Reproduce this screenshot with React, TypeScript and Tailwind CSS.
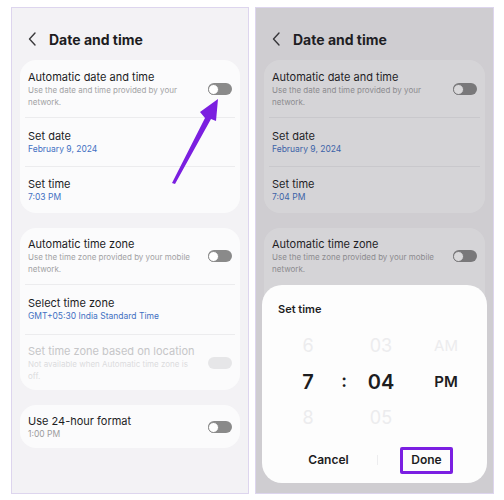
import React from "react";

type Item = {
  title: string;
  sub?: string;
  value?: string;
  valueGray?: boolean;
  toggle?: boolean;
  disabled?: boolean;
  pt: string;
  pb: string;
};

function Toggle({ disabled }: { disabled?: boolean }) {
  if (disabled) {
    return <div className="h-[12px] w-[24px] shrink-0 rounded-full bg-[#e6e6e8]" />;
  }
  return (
    <div className="flex h-[12px] w-[24px] shrink-0 items-center rounded-full bg-[#8a8a8a]">
      <div className="h-[11px] w-[11px] rounded-full border border-[#8a8a8a] bg-white" />
    </div>
  );
}

function Row({ item }: { item: Item }) {
  return (
    <div className={`flex items-center justify-between px-2 ${item.pt} ${item.pb}`}>
      <div className="w-[172px]">
        <div
          className={`text-[11px] leading-[14px] ${
            item.disabled ? "text-[#c6c6c8]" : "text-[#1d1d1f]"
          }`}
        >
          {item.title}
        </div>
        {item.sub && (
          <div
            className={`text-[8px] leading-[12px] ${
              item.disabled ? "text-[#dcdcde]" : "text-[#a2a2a4]"
            }`}
          >
            {item.sub}
          </div>
        )}
        {item.value && (
          <div
            className={`text-[8.5px] leading-[12px] ${
              item.valueGray ? "text-[#9c9c9e]" : "text-[#4270c2]"
            }`}
          >
            {item.value}
          </div>
        )}
      </div>
      {item.toggle && <Toggle disabled={item.disabled} />}
    </div>
  );
}

function Card({ items, className }: { items: Item[]; className: string }) {
  return (
    <div className={`rounded-[16px] bg-[#fbfbfc] ${className}`}>
      {items.map((it, i) => (
        <div key={it.title}>
          {i > 0 && <div className="mx-[5px] h-px bg-[#ececee]" />}
          <Row item={it} />
        </div>
      ))}
    </div>
  );
}

const timeZoneRow: Item = {
  title: "Automatic time zone",
  sub: "Use the time zone provided by your mobile network.",
  toggle: true,
  pt: "pt-[9px]",
  pb: "pb-[9px]",
};

// partial = right-hand shot, where the dialog hides everything below the first zone row
function Settings({ time, partial }: { time: string; partial?: boolean }) {
  return (
    <div className="flex flex-col">
      {/* header */}
      <div className="flex h-[18px] items-center pl-[16px] mt-[22px]">
        <svg width="9" height="14" viewBox="0 0 9 14" className="mr-[12px]">
          <polyline
            points="7,1 1.5,7 7,13"
            fill="none"
            stroke="#3a3a3c"
            strokeWidth="1.4"
            strokeLinecap="round"
            strokeLinejoin="round"
          />
        </svg>
        <span className="text-[14px] font-bold text-[#1d1d1f]">Date and time</span>
      </div>

      <Card
        className="mx-[8px] mt-[12px]"
        items={[
          {
            title: "Automatic date and time",
            sub: "Use the date and time provided by your network.",
            toggle: true,
            pt: "pt-[10px]",
            pb: "pb-[9px]",
          },
          { title: "Set date", value: "February 9, 2024", pt: "pt-[11px]", pb: "pb-[11px]" },
          { title: "Set time", value: time, pt: "pt-[10px]", pb: "pb-[10px]" },
        ]}
      />

      {partial ? (
        <Card className="mx-[8px] mt-[15px] h-[120px]" items={[timeZoneRow]} />
      ) : (
        <>
          <Card
            className="mx-[8px] mt-[15px]"
            items={[
              timeZoneRow,
              {
                title: "Select time zone",
                value: "GMT+05:30 India Standard Time",
                pt: "pt-[11px]",
                pb: "pb-[12px]",
              },
              {
                title: "Set time zone based on location",
                sub: "Not available when Automatic time zone is off.",
                toggle: true,
                disabled: true,
                pt: "pt-[9px]",
                pb: "pb-[8px]",
              },
            ]}
          />

          <Card
            className="mx-[8px] mt-[15px]"
            items={[
              {
                title: "Use 24-hour format",
                value: "1:00 PM",
                valueGray: true,
                toggle: true,
                pt: "pt-[9px]",
                pb: "pb-[8px]",
              },
            ]}
          />
        </>
      )}
    </div>
  );
}

function TimeDialog() {
  return (
    <div className="absolute left-[6px] top-[277px] h-[198px] w-[225px] rounded-[20px] bg-[#fdfdfd] pt-[16px] pb-[10px]">
      <div className="pl-[16px] text-[11px] font-semibold leading-[16px] text-[#1d1d1f]">
        Set time
      </div>
      <div className="mt-[11px] flex pl-[16px] text-center">
        <div className="w-[60px]">
          <div className="h-[36px] text-[18px] leading-[36px] text-[#ececee]">6</div>
          <div className="h-[36px] text-[20px] font-semibold leading-[36px] text-[#1d1d1f]">7</div>
          <div className="h-[36px] text-[18px] leading-[36px] text-[#ececee]">8</div>
        </div>
        <div className="w-[12px]">
          <div className="h-[36px]" />
          <div className="h-[36px] text-[18px] font-semibold leading-[34px] text-[#1d1d1f]">:</div>
        </div>
        <div className="w-[62px]">
          <div className="h-[36px] text-[18px] leading-[36px] text-[#ececee]">03</div>
          <div className="h-[36px] text-[20px] font-semibold leading-[36px] text-[#1d1d1f]">04</div>
          <div className="h-[36px] text-[18px] leading-[36px] text-[#ececee]">05</div>
        </div>
        <div className="w-[68px]">
          <div className="h-[36px] text-[15px] leading-[36px] text-[#ececee]">AM</div>
          <div className="h-[36px] text-[15px] font-semibold leading-[36px] text-[#1d1d1f]">PM</div>
        </div>
      </div>
      <div className="mt-[10px] flex h-[28px] items-center pl-[18px] pr-[12px]">
        <div className="flex flex-1 justify-center text-[12px] font-semibold text-[#1d1d1f]">
          Cancel
        </div>
        <div className="h-[10px] w-px bg-[#ededef]" />
        <div className="flex flex-1 justify-center">
          <div className="flex h-[27px] w-[53px] items-center justify-center rounded-[2px] border-[3px] border-[#7b1fe2] text-[12px] font-semibold text-[#1d1d1f]">
            Done
          </div>
        </div>
      </div>
    </div>
  );
}

export default function App() {
  return (
    <div
      className="flex h-[500px] w-[504px] bg-white pt-[7px]"
      style={{ fontFamily: "Inter, 'Noto Sans', sans-serif" }}
    >
      {/* left screenshot */}
      <div className="relative ml-[11px] h-[487px] w-[238px] overflow-hidden border border-[#ddd5ee] bg-[#f3f2f5]">
        <Settings time="7:03 PM" />
        <svg
          className="absolute left-0 top-0"
          width="238"
          height="487"
          viewBox="12 8 238 487"
        >
          <polygon
            points="172,183 205,118 200,112 218,99 216,121 211,119 175,184"
            fill="#7b1fe0"
          />
        </svg>
      </div>

      {/* right screenshot, dimmed behind the time picker */}
      <div className="relative ml-[6px] h-[487px] w-[239px] overflow-hidden border border-[#ddd5ee] bg-[#f3f2f5]">
        <Settings time="7:04 PM" partial />
        <div className="absolute inset-0 bg-[#2a2630]/[0.18]" />
        <TimeDialog />
      </div>
    </div>
  );
}
